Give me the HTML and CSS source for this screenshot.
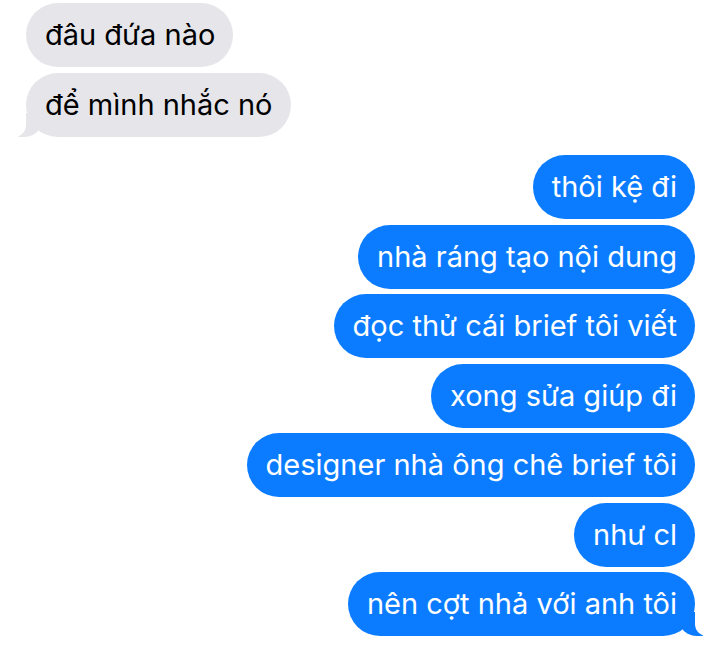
FILE: index.html
```html
<!DOCTYPE html>
<html lang="vi">
<head>
  <meta charset="UTF-8" />
  <meta name="viewport" content="width=device-width, initial-scale=1.0"/>
  <title>Tin nhắn</title>
  <link rel="stylesheet" href="styles.css">
</head>
<body>
  <div class="chat">
    <div class="nhom nhom-ban">
      <p class="tin tin-ban">đâu đứa nào</p>
      <p class="tin tin-ban cuoi">để mình nhắc nó</p>
    </div>
    <div class="nhom nhom-toi">
      <p class="tin tin-toi">thôi kệ đi</p>
      <p class="tin tin-toi">nhà ráng tạo nội dung</p>
      <p class="tin tin-toi">đọc thử cái brief tôi viết</p>
      <p class="tin tin-toi">xong sửa giúp đi</p>
      <p class="tin tin-toi">designer nhà ông chê brief tôi</p>
      <p class="tin tin-toi">như cl</p>
      <p class="tin tin-toi cuoi">nên cợt nhả với anh tôi</p>
    </div>
  </div>
</body>
</html>
```

FILE: styles.css
```css
* {
  box-sizing: border-box;
}

body {
  margin: 0;
  background: #fff;
  font-family: Inter, "Noto Sans", sans-serif;
}

.chat {
  width: 720px;
  height: 648px;
  padding: 3px 25px 0 26px;
  display: flex;
  flex-direction: column;
  gap: 18px;
  overflow: hidden;
}

.nhom {
  display: flex;
  flex-direction: column;
  gap: 6px;
}

.nhom-ban {
  align-items: flex-start;
}

.nhom-toi {
  align-items: flex-end;
  gap: 5.5px;
}

.tin {
  position: relative;
  margin: 0;
  height: 64px;
  padding: 15px 18px 15px 19px;
  border-radius: 32px;
  font-size: 29px;
  line-height: 34px;
  white-space: nowrap;
}

.tin-ban {
  background: #e5e5ea;
  color: #000;
}

.tin-toi {
  background: #0b7cff;
  color: #fff;
}

/* duoi bong bong */
.tin.cuoi::before,
.tin.cuoi::after {
  content: "";
  position: absolute;
  bottom: 0;
  height: 24px;
}

.tin-toi.cuoi::before {
  right: -8px;
  width: 24px;
  background: #0b7cff;
  border-bottom-left-radius: 18px 16px;
}

.tin-toi.cuoi::after {
  right: -14px;
  width: 14px;
  background: #fff;
  border-bottom-left-radius: 12px;
}

.tin-ban.cuoi::before {
  left: -8px;
  width: 24px;
  background: #e5e5ea;
  border-bottom-right-radius: 18px 16px;
}

.tin-ban.cuoi::after {
  left: -14px;
  width: 14px;
  background: #fff;
  border-bottom-right-radius: 12px;
}
```
